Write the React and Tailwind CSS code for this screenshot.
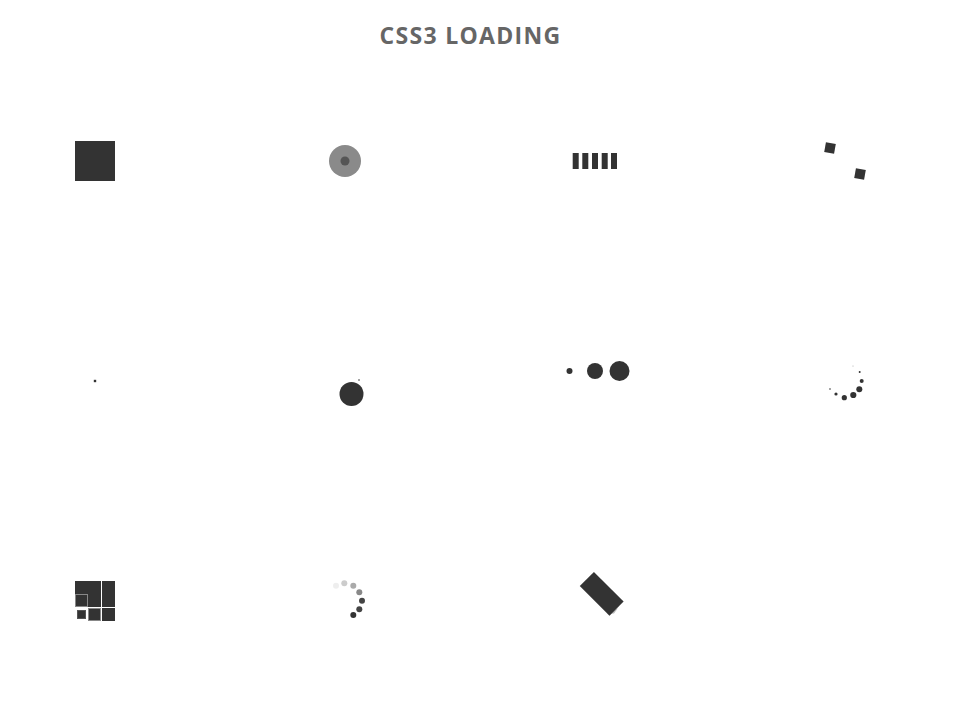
const Cell = ({ children }) => (
  <div className="w-[250px] h-[220px] pl-[70px] pt-[76px]">
    <svg width="70" height="70" viewBox="0 0 70 70" className="overflow-visible">
      {children}
    </svg>
  </div>
);

const loaders = [
  // row 1
  <rect key="a" x="5" y="15" width="40" height="40" fill="#333" />,
  <g key="b">
    <circle cx="25" cy="35" r="16" fill="#8a8a8a" />
    <circle cx="25" cy="35" r="4.5" fill="#555" />
  </g>,
  <g key="c" fill="#333">
    {[2.7, 12.3, 22, 31.7, 41].map((x) => (
      <rect key={x} x={x} y="27" width="6" height="16" />
    ))}
  </g>,
  <g key="d" fill="#333">
    <rect x="5" y="17" width="10" height="10" transform="rotate(10 10 22)" />
    <rect x="35" y="43" width="10" height="10" transform="rotate(10 40 48)" />
  </g>,
  // row 2
  <rect key="e" x="23.8" y="33.8" width="2.4" height="2.4" fill="#333" />,
  <g key="f" fill="#333">
    <circle cx="31.5" cy="48" r="12" />
    <circle cx="39" cy="34" r="0.8" />
  </g>,
  <g key="g" fill="#333">
    <circle cx="-0.5" cy="25" r="3" />
    <circle cx="25" cy="25" r="8" />
    <circle cx="49.5" cy="25" r="10" />
  </g>,
  <g key="h" fill="#333">
    <circle cx="10" cy="43" r="0.8" />
    <circle cx="16" cy="48" r="1.6" />
    <circle cx="24.3" cy="51.7" r="2.6" />
    <circle cx="33.3" cy="49" r="3.1" />
    <circle cx="39.3" cy="43.3" r="3" />
    <circle cx="41.7" cy="35" r="2" />
    <circle cx="39.7" cy="26" r="1" />
    <circle cx="33" cy="20" r="0.5" fill="#999" />
  </g>,
  // row 3
  <g key="i" transform="translate(5 15)">
    <rect x="0" y="0" width="26" height="26" fill="#333" />
    <rect x="0.5" y="13.5" width="12" height="12" fill="#333" stroke="#888" />
    <rect x="27" y="0" width="13" height="26" fill="#333" />
    <rect x="2.5" y="29.5" width="8" height="8" fill="#333" stroke="#555" />
    <rect x="13.5" y="27.5" width="12" height="12" fill="#333" stroke="#888" />
    <rect x="27" y="27" width="13" height="13" fill="#333" />
  </g>,
  <g key="j">
    <circle cx="16" cy="19.7" r="3" fill="#eee" />
    <circle cx="24.3" cy="17.3" r="3" fill="#ccc" />
    <circle cx="33.3" cy="19.7" r="3" fill="#aaa" />
    <circle cx="39.3" cy="26.3" r="3" fill="#888" />
    <circle cx="42" cy="34.7" r="3" fill="#444" />
    <circle cx="39.3" cy="43.3" r="3" fill="#444" />
    <circle cx="33.3" cy="49" r="3" fill="#333" />
  </g>,
  <g key="k">
    <polygon points="38,48 48,42 44,47.5" fill="#bbb" />
    <rect x="10.7" y="17.8" width="42" height="20" fill="#333" transform="rotate(45 31.7 27.8)" />
  </g>,
];

export default function App() {
  return (
    <div className="min-h-screen bg-white overflow-hidden font-['Open_Sans',sans-serif]">
      <div className="w-[941px] pt-[20px] text-center text-[23px] leading-[30px] font-bold tracking-[1.3px] text-[#666]">
        CSS3 LOADING
      </div>
      <div className="grid grid-cols-[250px_250px_250px_216px] w-[966px]">
        {loaders.map((l, i) => (
          <Cell key={i}>{l}</Cell>
        ))}
      </div>
    </div>
  );
}
